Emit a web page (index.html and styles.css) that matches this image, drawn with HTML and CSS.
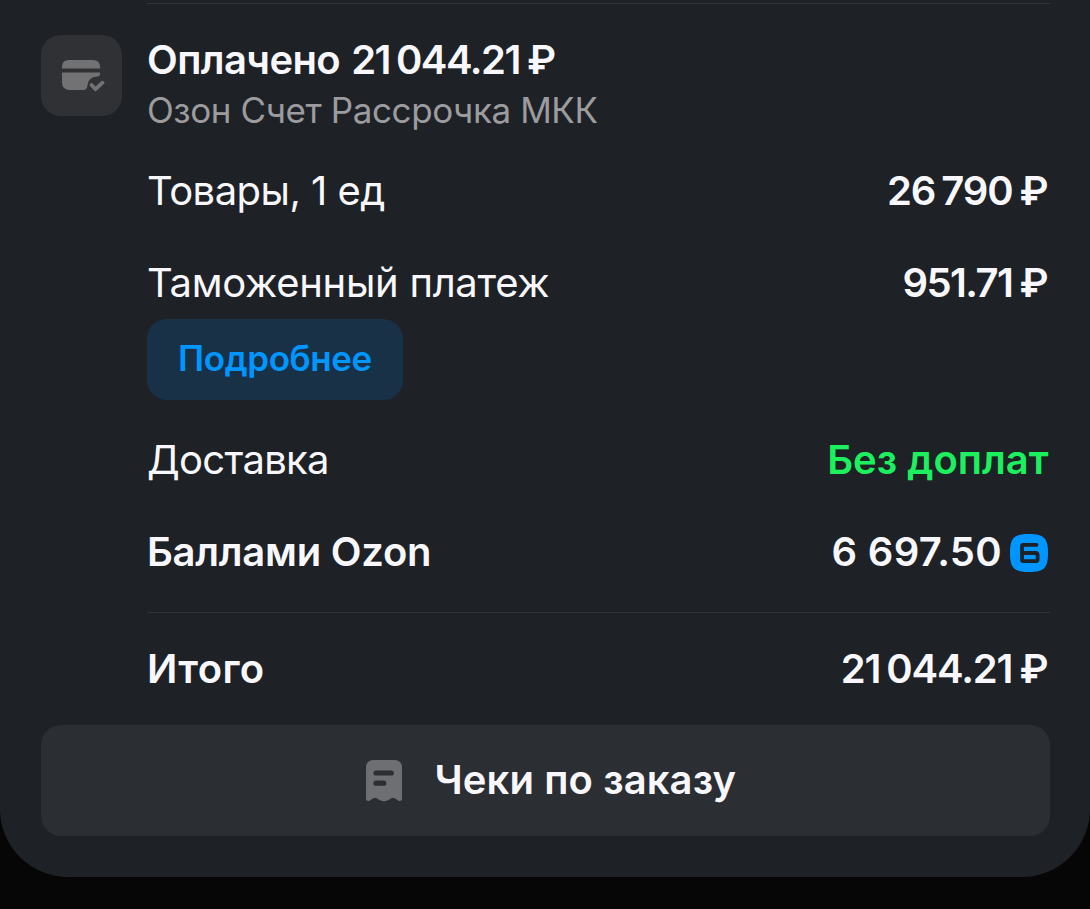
FILE: index.html
```html
<!DOCTYPE html>
<html lang="ru">
<head>
<meta charset="utf-8">
<title>Оплата заказа</title>
<link rel="stylesheet" href="styles.css">
</head>
<body>
<main class="sheet">
  <section class="payment">
    <div class="payment-icon">
      <svg width="44" height="34" viewBox="0 0 44 34">
        <path fill="#727274" d="M1 9.500V8Q1 1 8 1H32Q39 1 39 8V9.500ZM1 13.500H39V14.500Q39 17.500 36.500 17.500Q27 18 26.500 26Q26.500 31 22 31H9Q1 31 1 23Z"/>
        <path fill="none" stroke="#727274" stroke-width="3.800" stroke-linecap="round" stroke-linejoin="round" d="M30.500 26L34.500 30.200L41.500 23.700"/>
      </svg>
    </div>
    <div class="details">
      <header class="heading">
        <h1 class="title"><span class="paid">Оплачено</span><span class="amount amount-title">21<i class="thin"></i>044.21</span><span class="ruble">₽</span></h1>
        <p class="bank">Озон Счет Рассрочка МКК</p>
      </header>
      <div class="row goods"><span class="label label-goods">Товары, 1 ед</span><span class="value"><span class="amount amount-goods">26<i class="thin"></i>790</span><span class="ruble">₽</span></span></div>
      <div class="row customs"><span class="label label-customs">Таможенный платеж</span><span class="value"><span class="amount amount-customs">951.71</span><span class="ruble">₽</span></span></div>
      <button class="more">Подробнее</button>
      <div class="row delivery"><span class="label label-delivery">Доставка</span><span class="value free">Без доплат</span></div>
      <div class="row points"><span class="label label-points">Баллами Ozon</span><span class="value"><span class="amount-points">6 697.50</span>
        <svg class="badge" width="38" height="38" viewBox="0 0 38 38"><path fill="#0096ff" d="M0 19C0 4 4 0 19 0S38 4 38 19S34 38 19 38S0 34 0 19Z"/><path fill="none" stroke="#1e2126" stroke-width="3.800" stroke-linecap="round" stroke-linejoin="round" d="M26.500 10.800H13.500Q12 10.800 12 12.300V25.700Q12 27.200 13.500 27.200H25.500Q27.600 27.200 27.600 25.200V21Q27.600 19 25.500 19H15"/></svg></span></div>
      <div class="row total"><span class="label label-total">Итого</span><span class="value"><span class="amount amount-total">21<i class="thin"></i>044.21</span><span class="ruble">₽</span></span></div>
    </div>
  </section>
  <button class="receipts">
    <svg width="36" height="42" viewBox="0 0 36 42"><path fill="#6e6f72" d="M0 8Q0 0 8 0H28Q36 0 36 8V38.500Q36 41 33.500 41Q32.500 41 31.500 40L28.500 38.200Q27 37.300 25.500 38.200L21.500 40.500Q18 42 14.500 40.500L10.500 38.200Q9 37.300 7.500 38.200L4.500 40Q3.500 41 2.500 41Q0 41 0 38.500Z"/><path stroke="#2b2e32" stroke-width="5.200" stroke-linecap="round" d="M10 13H25.300M10 23.200H17.800"/></svg>
    <span class="receipts-label">Чеки по заказу</span>
  </button>
</main>
</body>
</html>
```
FILE: styles.css
```css
* { box-sizing: border-box; }
body {
  margin: 0;
  height: 909px;
  overflow: hidden;
  background: #060606;
  color: #f7f7fc;
  font: 400 40px/48px Inter, "Noto Sans", sans-serif;
}
h1, p { margin: 0; }
button { border: 0; color: inherit; font: inherit; }
svg { display: block; flex: none; }
.sheet {
  height: 877px;
  padding: 3px 40.5px 0 40.5px;
  border-radius: 0 0 68px 68px;
  background: #1e2126;
}
.payment { display: flex; gap: 25.5px; }
.payment-icon {
  display: grid;
  place-items: center;
  width: 81px;
  height: 81px;
  margin-top: 32px;
  padding-left: 3px;
  border-radius: 20px;
  background: #303135;
}
.details { flex: 1; border-top: 1px solid #33363a; }
.heading { padding-top: 32px; }
.title { display: flex; font-size: 40px; font-weight: 600; height: 48px; }
.paid { letter-spacing: -.6px; margin-right: 11px; }
.thin { display: inline-block; width: 6px; }
.amount { letter-spacing: -1.15px; }
.amount-title { letter-spacing: -1.5px; }
.amount-customs { letter-spacing: -1.6px; }
.amount-points { letter-spacing: .3px; }
.ruble { margin-left: 7px; }
.bank { height: 47px; font-size: 35px; line-height: 52px; letter-spacing: -.41px; color: #9c9c9f; }
.row { display: flex; justify-content: space-between; height: 48px; white-space: nowrap; }
.value { display: flex; margin-right: 1px; font-weight: 600; }
.goods { margin-top: 36px; }
.label-goods { letter-spacing: -.55px; }
.customs { margin-top: 44px; }
.label-customs { letter-spacing: -.3px; }
.more {
  display: block;
  width: 256px;
  height: 81px;
  margin-top: 12px;
  padding: 0 0 3px;
  border-radius: 20px;
  background: #193147;
  color: #0096ff;
  font-size: 35px;
  font-weight: 600;
  letter-spacing: -.4px;
}
.delivery { margin-top: 36px; }
.label-delivery { letter-spacing: -.7px; }
.free { color: #1df05e; }
.points { margin-top: 44px; }
.label-points, .label-total { font-weight: 600; }
.label-points { letter-spacing: -.25px; }
.label-total { letter-spacing: .4px; }
.amount-points { margin-right: 8px; }
.badge { margin: 6px .5px 0 0; }
.total { height: 81px; margin-top: 36px; padding-top: 32px; border-top: 1px solid #303338; }
.receipts {
  display: flex;
  align-items: center;
  gap: 33px;
  width: 100%;
  height: 111px;
  margin-top: 32px;
  padding: 0 0 0 325px;
  border-radius: 20px;
  background: #2b2e32;
  font-weight: 600;
}
.receipts-label { margin-top: -1px; letter-spacing: .1px; }
```
